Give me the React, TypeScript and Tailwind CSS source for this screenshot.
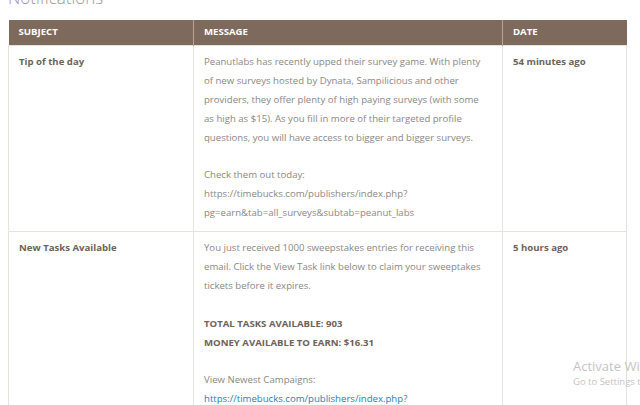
const rows = [
  {
    subject: "Tip of the day",
    date: "54 minutes ago",
    message: (
      <>
        <p>
          Peanutlabs has recently upped their survey game. With plenty of new
          surveys hosted by Dynata, Sampilicious and other providers, they offer
          plenty of high paying surveys (with some as high as $15). As you fill
          in more of their targeted profile questions, you will have access to
          bigger and bigger surveys.
        </p>
        <p className="mt-[18.9px]">
          Check them out today:
          <br />
          https://timebucks.com/publishers/index.php?
          <br />
          pg=earn&amp;tab=all_surveys&amp;subtab=peanut_labs
        </p>
      </>
    ),
  },
  {
    subject: "New Tasks Available",
    date: "5 hours ago",
    message: (
      <>
        <p>
          You just received 1000 sweepstakes entries for receiving this email.
          Click the View Task link below to claim your sweeptakes tickets before
          it expires.
        </p>
        <p className="mt-[18.9px] font-bold text-[#6e6259]">
          TOTAL TASKS AVAILABLE: 903
          <br />
          MONEY AVAILABLE TO EARN: $16.31
        </p>
        <p className="mt-[18.9px]">
          View Newest Campaigns:
          <br />
          <a className="text-[#2b7bb9]">
            https://timebucks.com/publishers/index.php?
          </a>
        </p>
      </>
    ),
  },
];

export default function App() {
  return (
    <div
      className="relative h-[405px] w-[640px] overflow-hidden bg-white"
      style={{ fontFamily: '"Open Sans", sans-serif' }}
    >
      <h1 className="-mt-[14px] ml-[8px] h-[34px] text-[17px] font-light leading-[24px] text-[#9a9a9a]">
        Notifications
      </h1>
      <table className="ml-[8px] w-[618px] table-fixed border-collapse text-[9.6px] leading-[18.9px]">
        <colgroup>
          <col className="w-[185px]" />
          <col className="w-[309px]" />
          <col className="w-[124px]" />
        </colgroup>
        <thead>
          <tr className="h-[25px] bg-[#7d6a5c] text-left text-white">
            <th className="border-r border-[#b5a699] px-[10px] font-bold">SUBJECT</th>
            <th className="border-r border-[#b5a699] px-[10px] font-bold">MESSAGE</th>
            <th className="px-[10px] font-bold">DATE</th>
          </tr>
        </thead>
        <tbody>
          {rows.map((row) => (
            <tr key={row.subject} className="align-top">
              <td className="border border-[#e6e2dc] px-[10px] py-[7.5px] font-bold text-[#6e6259]">
                {row.subject}
              </td>
              <td className="border border-[#e6e2dc] pl-[10px] pr-[16px] py-[7.5px] text-[#8a8784]">
                {row.message}
              </td>
              <td className="border border-[#e6e2dc] px-[10px] py-[7.5px] font-bold text-[#6e6259]">
                {row.date}
              </td>
            </tr>
          ))}
        </tbody>
      </table>
      <div className="absolute left-[573px] top-[357px] text-[#c4c4c4]">
        <div className="whitespace-nowrap text-[13px] leading-[18px]">Activate Windows</div>
        <div className="whitespace-nowrap text-[9.5px] leading-[13px]">Go to Settings to activate Windows.</div>
      </div>
    </div>
  );
}
